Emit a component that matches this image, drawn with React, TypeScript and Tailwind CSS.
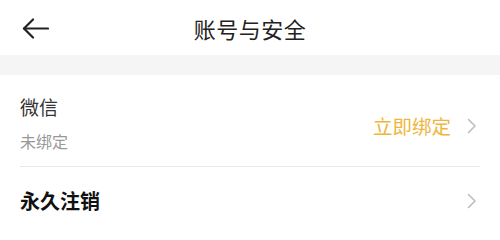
const font = { fontFamily: '"Noto Sans CJK SC", "Noto Sans", sans-serif' };

function BackArrow() {
  return (
    <svg width="27" height="21" viewBox="0 0 27 21" fill="none">
      <path d="M2 10.5H26" stroke="#222" strokeWidth="2.2" strokeLinecap="round" />
      <path d="M11 1.5L2 10.5L11 19.5" stroke="#222" strokeWidth="2.2" strokeLinecap="round" strokeLinejoin="round" />
    </svg>
  );
}

function Chevron() {
  return (
    <svg width="10" height="16" viewBox="0 0 10 16" fill="none">
      <path d="M1.5 1.5L8 8L1.5 14.5" stroke="#bdbdbd" strokeWidth="1.6" strokeLinecap="round" strokeLinejoin="round" />
    </svg>
  );
}

export default function App() {
  return (
    <div className="w-[500px] h-[223px] bg-white overflow-hidden" style={font}>
      <div className="h-[55px] grid grid-cols-[1fr_auto_1fr] items-center">
        <div className="pl-[22px] flex items-center pt-[2px]">
          <BackArrow />
        </div>
        <div className="text-[22px] leading-[30px] text-[#222] tracking-[0.5px]">账号与安全</div>
        <div />
      </div>

      <div className="h-5 bg-[#f5f5f5]" />

      <div className="flex items-center pl-5 pr-[23px] pt-[19px] pb-[14px]">
        <div className="flex-1 flex flex-col gap-[10px]">
          <div className="text-[19px] leading-[26px] text-[#333]">微信</div>
          <div className="text-[16px] leading-[22px] text-[#999]">未绑定</div>
        </div>
        <div className="flex items-center gap-[16px] pt-[5px]">
          <span className="text-[19.5px] leading-[26px] text-[#f0b63c]">立即绑定</span>
          <Chevron />
        </div>
      </div>

      <div className="mx-5 h-px bg-[#e8e8e8]" />

      <div className="h-[68px] flex items-center justify-between pl-5 pr-[23px]">
        <span className="text-[20px] leading-[28px] font-bold text-[#111]">永久注销</span>
        <Chevron />
      </div>
    </div>
  );
}
